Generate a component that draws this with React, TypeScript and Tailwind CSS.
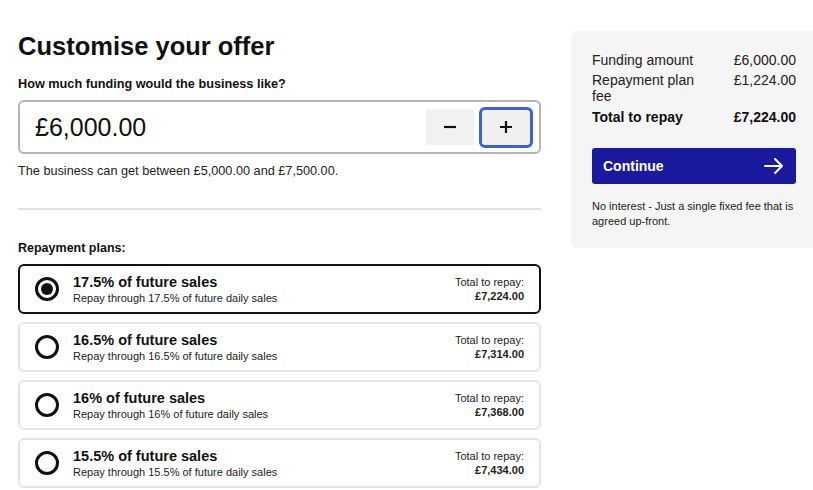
const plans = [
  { pct: '17.5%', total: '£7,224.00' },
  { pct: '16.5%', total: '£7,314.00' },
  { pct: '16%', total: '£7,368.00' },
  { pct: '15.5%', total: '£7,434.00' },
]

function PlanCard({ pct, total, selected }: { pct: string; total: string; selected: boolean }) {
  return (
    <div
      className={
        selected
          ? 'flex h-[50px] items-center rounded-md border-2 border-[#111] pl-[15px] pr-[15px]'
          : 'flex h-[50px] items-center rounded-md border-2 border-[#e4e4e4] pl-[15px] pr-[15px]'
      }
    >
      <div className="flex h-[24px] w-[24px] items-center justify-center rounded-full border-[3px] border-[#111]">
        {selected && <div className="h-[12px] w-[12px] rounded-full bg-[#111]" />}
      </div>
      <div className="ml-[14px] flex flex-1 flex-col">
        <span className="text-[14.5px] font-bold leading-[17px] text-[#111]">{pct} of future sales</span>
        <span className="text-[11px] leading-[14px] text-[#222]">Repay through {pct} of future daily sales</span>
      </div>
      <div className="flex flex-col items-end">
        <span className="text-[11px] leading-[14px] text-[#222]">Total to repay:</span>
        <span className="text-[11px] font-bold leading-[14px] text-[#222]">{total}</span>
      </div>
    </div>
  )
}

export default function App() {
  return (
    <div className="flex h-[490px] w-[813px] overflow-hidden bg-white pl-[18px] pt-[31px] font-['Liberation_Sans',Arial,sans-serif] text-[#111]">
      <div className="flex w-[523px] shrink-0 flex-col">
        <h1 className="mt-[1px] text-[25.5px] font-bold leading-[28px]">Customise your offer</h1>
        <p className="mt-[17px] text-[12.7px] font-bold leading-[14px]">How much funding would the business like?</p>
        <div className="mt-[9px] flex h-[54px] items-center rounded-md border-2 border-[#b5b5b5] pl-[15px] pr-[6px]">
          <span className="flex-1 text-[25px] leading-[28px]">£6,000.00</span>
          <button className="flex h-[36px] w-[48px] items-center justify-center bg-[#f2f2f2] text-[22px] leading-none">
            <svg width="14" height="14" viewBox="0 0 14 14">
              <path d="M1 7h12" stroke="#111" strokeWidth="2.2" />
            </svg>
          </button>
          <button className="ml-[5px] flex h-[41px] w-[54px] items-center justify-center rounded-md border-[3px] border-[#3a63d8] bg-[#f0f0f0]">
            <svg width="14" height="14" viewBox="0 0 14 14">
              <path d="M1 7h12M7 1v12" stroke="#111" strokeWidth="2.2" />
            </svg>
          </button>
        </div>
        <p className="mt-[10px] text-[12.7px] leading-[14px] text-[#222]">
          The business can get between £5,000.00 and £7,500.00.
        </p>
        <div className="mt-[30px] h-[2px] bg-[#e2e2e2]" />
        <p className="mt-[31px] text-[12.5px] font-bold leading-[14px]">Repayment plans:</p>
        <div className="mt-[9px] flex flex-col gap-[8px]">
          {plans.map((p, i) => (
            <PlanCard key={p.pct} pct={p.pct} total={p.total} selected={i === 0} />
          ))}
        </div>
      </div>

      <div className="ml-[30px] flex h-[217px] w-[250px] shrink-0 flex-col rounded-md bg-[#f5f5f5] pl-[21px] pr-[25px] pt-[21px]">
        <div className="flex w-[204px] flex-col gap-[4px] text-[14px] leading-[16px] text-[#222]">
          <div className="flex justify-between">
            <span>Funding amount</span>
            <span>£6,000.00</span>
          </div>
          <div className="flex justify-between">
            <span className="w-[120px]">Repayment plan fee</span>
            <span>£1,224.00</span>
          </div>
          <div className="mt-[1px] flex justify-between font-bold text-[#111]">
            <span>Total to repay</span>
            <span>£7,224.00</span>
          </div>
        </div>
        <button className="mt-[23px] flex h-[36px] w-[204px] items-center justify-between rounded-[3px] bg-[#1a1a9e] pl-[11px] pr-[12px] text-[14px] font-bold text-white">
          <span>Continue</span>
          <svg width="20" height="16" viewBox="0 0 20 16" fill="none">
            <path d="M1 8h17M11 1l7 7-7 7" stroke="white" strokeWidth="2" strokeLinecap="round" strokeLinejoin="round" />
          </svg>
        </button>
        <p className="mt-[15px] w-[204px] text-[11px] leading-[15px] text-[#222]">
          No interest - Just a single fixed fee that is agreed up-front.
        </p>
      </div>
    </div>
  )
}
